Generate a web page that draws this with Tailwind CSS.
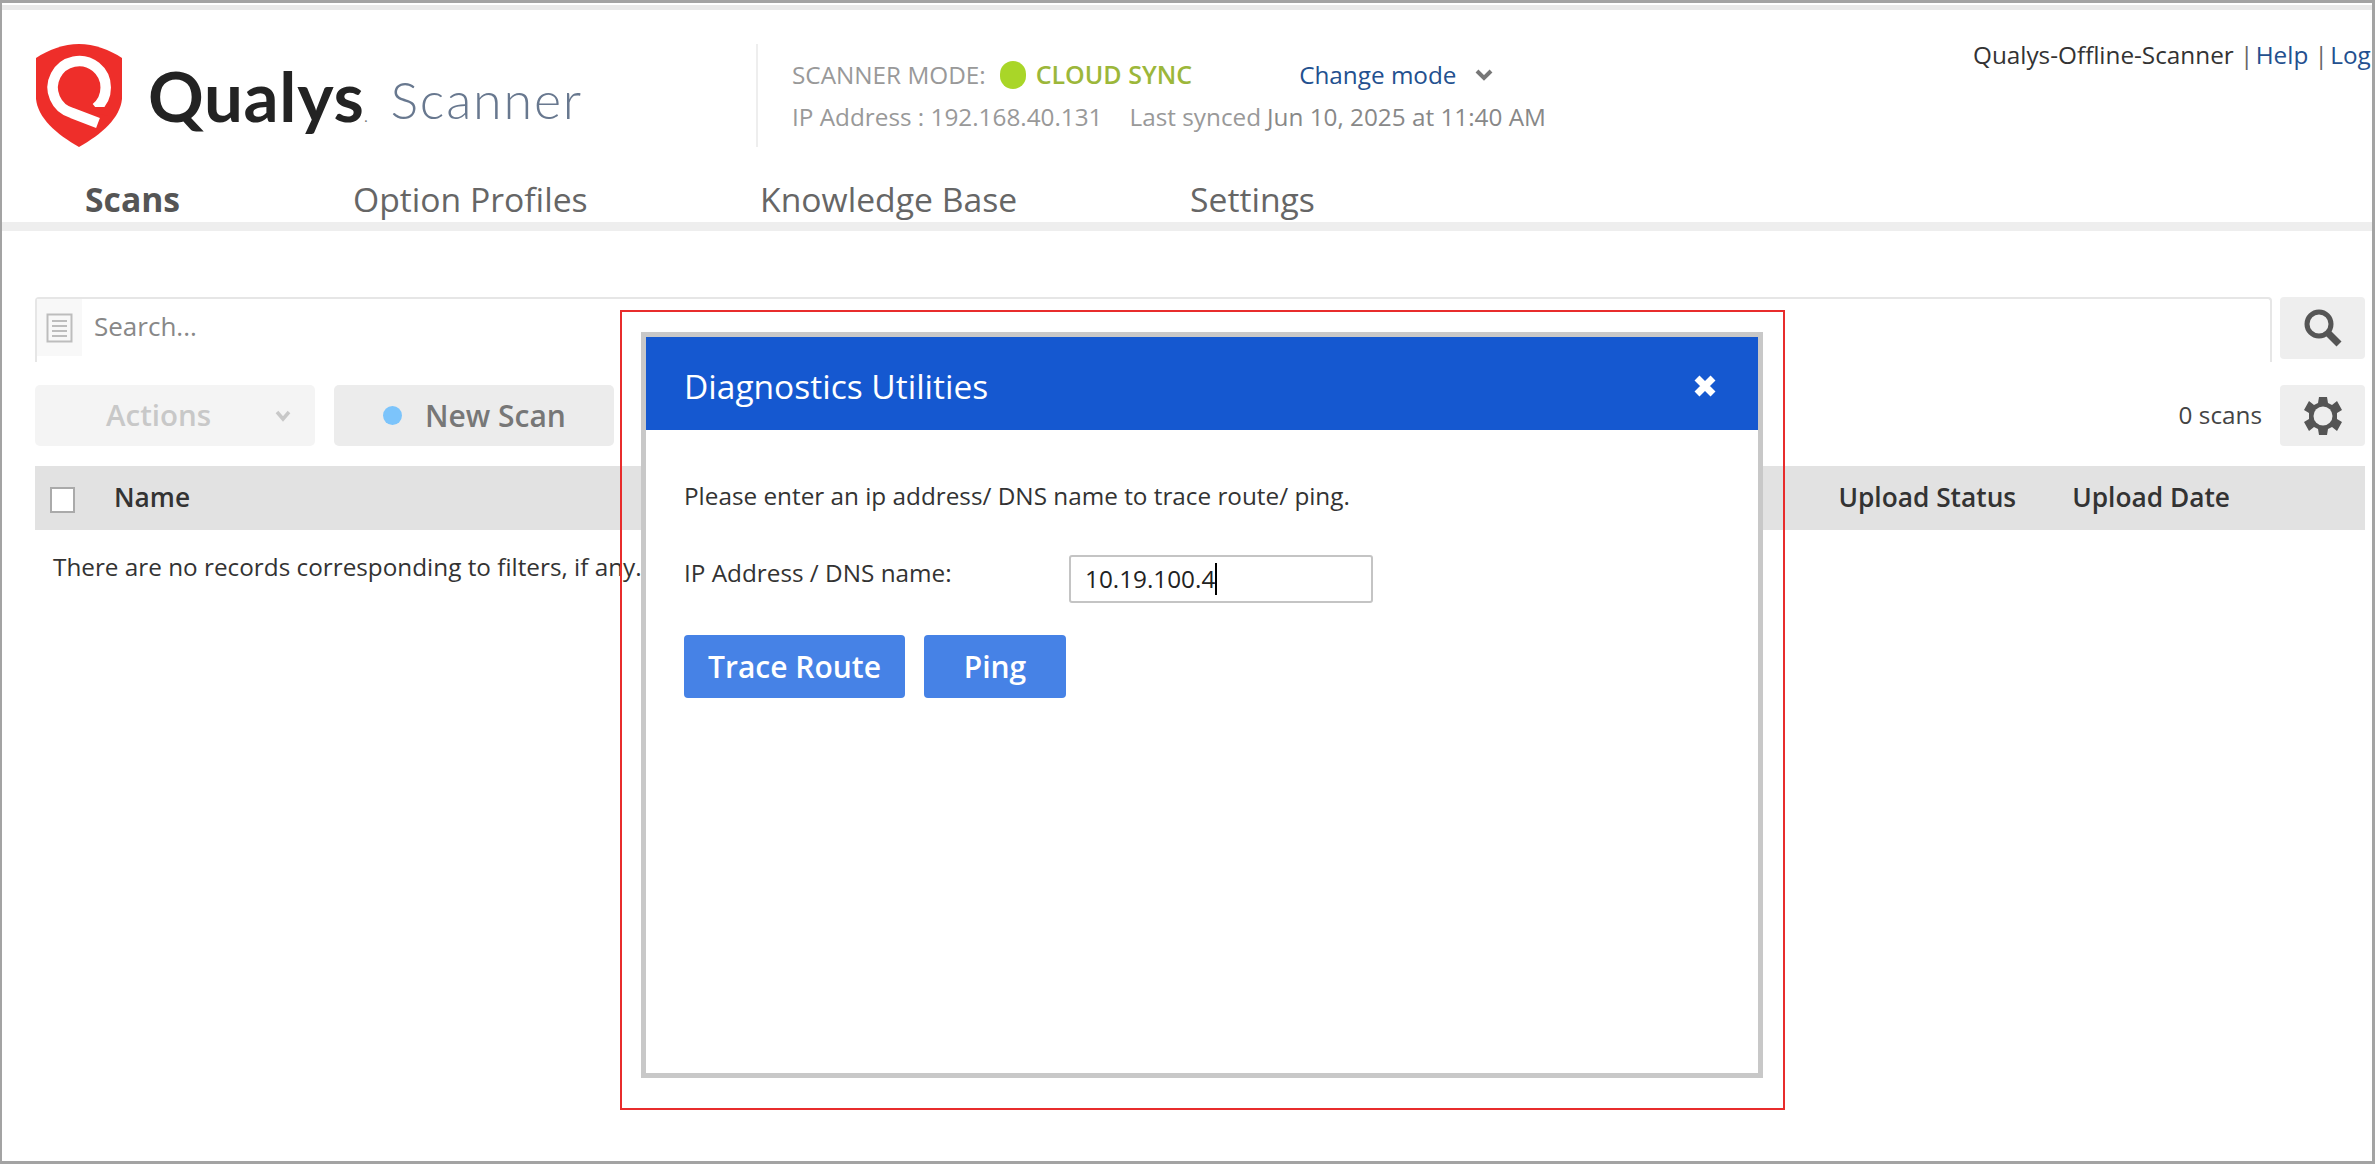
<!DOCTYPE html>
<html lang="en">
<head>
<meta charset="UTF-8">
<title>Qualys Scanner - Diagnostics Utilities</title>
<script src="https://cdn.jsdelivr.net/npm/@tailwindcss/browser@4"></script>
</head>
<body class="bg-white">
<div class="relative w-[2375px] h-[1164px] overflow-hidden bg-white border-t-[3px] border-l-[2px] border-r-[3px] border-b-[3px] border-[#a3a3a3] font-['Open_Sans',sans-serif] text-[24.3px] text-[#333]">
  <div class="h-[5px] mt-[2px] bg-[#e9e9e9]"></div>

  <!-- Header -->
  <div class="flex items-start pt-[34px] pl-[34px] h-[138px]">
    <div class="flex items-start w-[720px] shrink-0">
      <svg class="w-[86px] h-[103px] shrink-0" viewBox="0 0 86 103">
        <path d="M43 0C58 0 74 6 86 14V55C84 74 66 90 43 103C20 90 2 74 0 55V14C12 6 28 0 43 0Z" fill="#ee2e2a"/>
        <path d="M60 64A26.5 26.5 0 1 0 36 69L62 79" fill="none" stroke="#fff" stroke-width="10.5"/>
        <path d="M48 63H72V72L48 66Z" fill="#ee2e2a"/>
      </svg>
      <span class="ml-[26px] mt-[7px] font-['Lato',sans-serif] font-bold text-[69px] leading-[90px] tracking-[0.7px] text-[#232323]">Qualys<span class="text-[12px] text-[#777] tracking-normal">.</span></span>
      <span class="ml-[23px] mt-[20px] font-['Lato',sans-serif] font-light text-[52px] leading-[70px] tracking-[1.8px] text-[#68788f]">Scanner</span>
    </div>
    <div class="w-[2px] h-[103px] bg-[#eeeeee] shrink-0"></div>
    <div class="ml-[34px] shrink-0">
      <div class="flex items-center h-[34px] mt-[14px]">
        <span class="text-[#999]">SCANNER MODE:</span>
        <span class="ml-[14px] w-[26px] h-[28px] rounded-full bg-[#a9d628]"></span>
        <span class="ml-[10px] text-[25px] font-semibold text-[#9cb73a]">CLOUD SYNC</span>
        <span class="ml-[107px] text-[#23508f]">Change mode</span>
        <svg class="ml-[18px] w-[18px] h-[12px]" viewBox="0 0 18 12"><path d="M2 2L9 9L16 2" fill="none" stroke="#777" stroke-width="4"/></svg>
      </div>
      <div class="flex mt-[8px] h-[34px] items-center whitespace-nowrap">
        <span class="text-[#999]">IP Address : 192.168.40.131</span>
        <span class="ml-[27px] text-[#999]">Last synced</span>
        <span class="ml-[6px] text-[#888]">Jun 10, 2025 at 11:40 AM</span>
      </div>
    </div>
    <div class="ml-auto -mt-[7px] shrink-0 whitespace-nowrap w-[399px]">
      <span>Qualys-Offline-Scanner</span> <span class="text-[#666]">|</span> <a class="-ml-[4px] text-[#23508f]">Help</a> <span class="text-[#666]">|</span> <a class="-ml-[4px] text-[#23508f]">Log</a>
    </div>
  </div>

  <!-- Nav tabs -->
  <div class="flex h-[46px] pt-[28px] pl-[83px] text-[33.7px] leading-[46px] text-[#666] border-b-[9px] border-[#eeeeee] box-content">
    <span class="w-[268px] font-bold text-[#555]">Scans</span>
    <span class="w-[407px]">Option Profiles</span>
    <span class="w-[430px]">Knowledge Base</span>
    <span>Settings</span>
  </div>

  <div class="pl-[33px] pr-[7px]">
    <!-- Search -->
    <div class="flex mt-[66px] h-[65px] gap-[8px]">
      <div class="flex-1 flex items-start border-t-2 border-x-2 border-[#e6e6e6] rounded-t-[4px]">
        <div class="w-[45px] h-[57px] bg-[#f8f8f8] flex items-center justify-center shrink-0">
          <svg class="w-[27px] h-[30px]" viewBox="0 0 27 30" fill="none" stroke="#bdbdbd" stroke-width="2"><rect x="1.5" y="1.5" width="24" height="27"/><path d="M6 8H21M6 13H21M6 18H21M6 23H21"/></svg>
        </div>
        <span class="ml-[12px] mt-[8px] text-[26px] text-[#888]">Search...</span>
      </div>
      <div class="w-[85px] h-[62px] bg-[#eeeeee] rounded-[4px] flex items-center justify-center shrink-0">
        <svg class="w-[40px] h-[40px]" viewBox="0 0 40 40" fill="none" stroke="#555"><circle cx="16" cy="16" r="12" stroke-width="5"/><path d="M25 25L36 36" stroke-width="7"/></svg>
      </div>
    </div>

    <!-- Toolbar -->
    <div class="flex items-center mt-[23px] h-[61px]">
      <div class="relative w-[280px] h-full bg-[#f4f4f4] rounded-[5px] flex items-center pl-[71px] text-[29.5px] font-semibold text-[#c8c8c8]">
        Actions
        <svg class="absolute left-[240px] top-[25px] w-[16px] h-[12px]" viewBox="0 0 16 12"><path d="M2 2L8 9L14 2" fill="none" stroke="#c8c8c8" stroke-width="3.5"/></svg>
      </div>
      <div class="ml-[19px] w-[280px] h-full bg-[#ececec] rounded-[5px] flex items-center pl-[49px] text-[30px] font-semibold text-[#777]">
        <span class="w-[19px] h-[19px] rounded-full bg-[#7cc4fb]"></span>
        <span class="ml-[23px]">New Scan</span>
      </div>
      <span class="ml-auto text-[#444]">0 scans</span>
      <div class="ml-[18px] w-[85px] h-full bg-[#eeeeee] rounded-[4px] flex items-center justify-center">
        <svg class="w-[40px] h-[40px]" viewBox="0 0 40 40"><path d="M16 1H24L25 7L29 9L34 5L39 14L34 17V23L39 26L34 35L29 31L25 33L24 39H16L15 33L11 31L6 35L1 26L6 23V17L1 14L6 5L11 9L15 7Z" fill="#555"/><circle cx="20" cy="20" r="9.5" fill="#eeeeee"/></svg>
      </div>
    </div>

    <!-- Table -->
    <div class="flex items-center mt-[20px] h-[64px] bg-[#e2e2e2] text-[26.3px] font-semibold text-[#333]">
      <span class="ml-[15px] w-[25px] h-[26px] bg-white border-2 border-[#aaa] mt-[4px]"></span>
      <span class="ml-[39px]">Name</span>
      <span class="ml-auto">Upload Status</span>
      <span class="ml-[56px] mr-[135px]">Upload Date</span>
    </div>
    <p class="ml-[18px] mt-[19px]">There are no records corresponding to filters, if any.</p>
  </div>

  <!-- Highlight frame + dialog -->
  <div class="absolute left-[618px] top-[307px] w-[1165px] h-[800px] border-2 border-[#e82c2c] bg-transparent">
    <div class="absolute left-[19px] top-[20px] w-[1122px] h-[746px] bg-white border-[5px] border-[#c8c8c8] flex flex-col">
      <div class="flex items-center justify-between h-[93px] shrink-0 bg-[#1558d0] pl-[38px] pr-[41px] text-white text-[33.5px]">
        <span class="pt-[6px]">Diagnostics Utilities</span>
        <svg class="w-[24px] h-[24px] mt-[4px]" viewBox="0 0 24 24"><path d="M4 4L20 20M20 4L4 20" stroke="#fff" stroke-width="7" fill="none"/></svg>
      </div>
      <div class="pl-[38px] pt-[49px] text-[#333]">
        <p class="leading-[34px]">Please enter an ip address/ DNS name to trace route/ ping.</p>
        <div class="flex items-start mt-[42px]">
          <span class="w-[385px]">IP Address / DNS name:</span>
          <div class="w-[304px] h-[48px] border-2 border-[#c4c4c4] rounded-[3px] flex items-center pl-[14px] text-[#222]">10.19.100.4<span class="w-[2px] h-[32px] bg-black"></span></div>
        </div>
        <div class="flex mt-[32px] gap-[19px] text-[30px] font-semibold text-white">
          <span class="w-[221px] h-[63px] rounded-[4px] bg-[#4682e6] flex items-center justify-center">Trace Route</span>
          <span class="w-[142px] h-[63px] rounded-[4px] bg-[#4682e6] flex items-center justify-center">Ping</span>
        </div>
      </div>
    </div>
  </div>
</div>
</body>
</html>
